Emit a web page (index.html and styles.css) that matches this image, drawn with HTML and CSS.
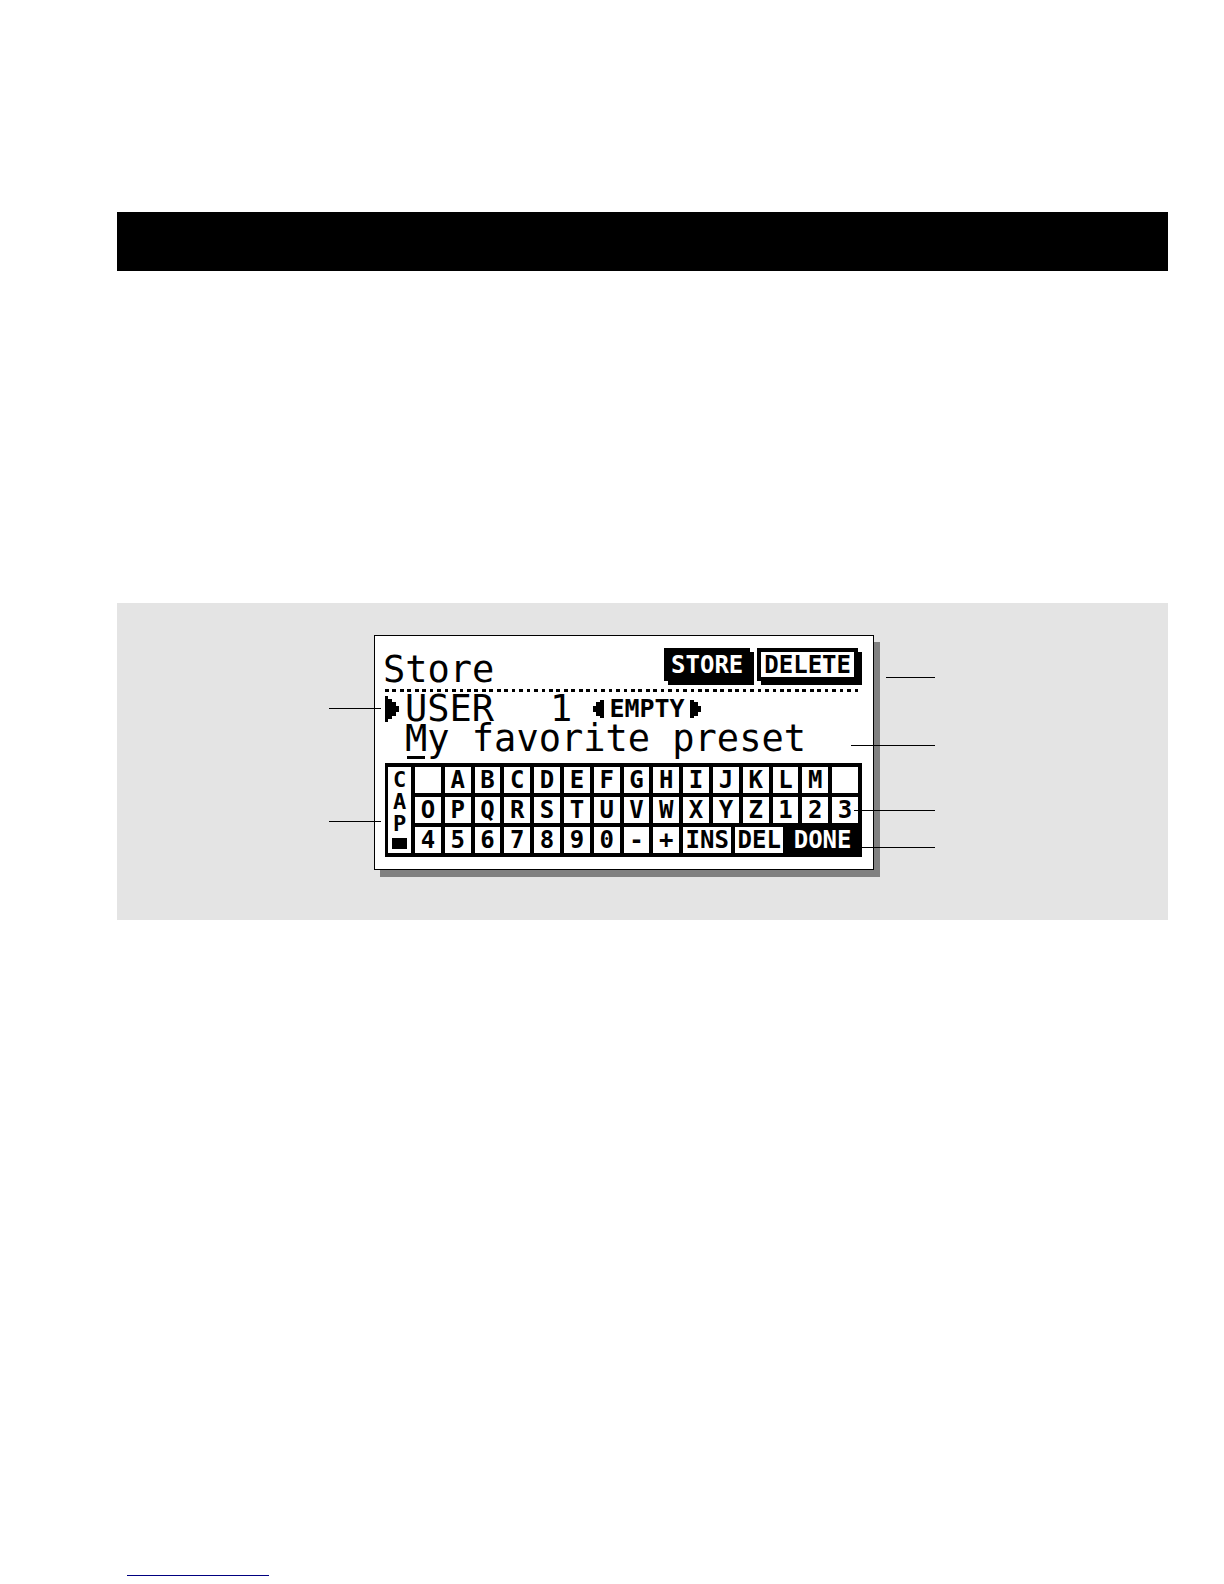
FILE: index.html
```
<!DOCTYPE html>
<html lang="en">
<head>
    <meta charset="UTF-8">
    <meta name="viewport" content="width=device-width, initial-scale=1.0">
    <title>Store</title>
    <link rel="stylesheet" href="styles.css">
</head>
<body>
    <main class="page">
        <div class="title-bar"></div>

        <div class="figure">
            <form class="lcd">
                <div class="header">
                    <h1>Store</h1>
                    <button type="button" class="action active">STORE</button>
                    <button type="button" class="action">DELETE</button>
                </div>

                <svg class="dots" viewBox="0 0 128 1" preserveAspectRatio="none" shape-rendering="crispEdges" aria-hidden="true">
                    <path d="M0 .5H128" stroke="#000" stroke-width="1" stroke-dasharray="1 1"/>
                </svg>

                <div class="slot">
                    <svg class="cursor" viewBox="0 0 14 26" aria-hidden="true">
                        <path d="M0 0h3v3h4v3h4v4h3v6h-3v4h-4v3h-4v3h-3z"/>
                    </svg>
                    <span class="bank">USER</span>
                    <span class="number">1</span>
                    <span class="status">
                        <svg viewBox="0 0 11 18" aria-hidden="true">
                            <path d="M11 0v18h-4v-2h-4v-4h-3v-6h3v-4h4v-2z"/>
                        </svg>
                        EMPTY
                        <svg viewBox="0 0 11 18" aria-hidden="true">
                            <path d="M0 0h4v2h4v4h3v6h-3v4h-4v2h-4z"/>
                        </svg>
                    </span>
                </div>

                <div class="name">
                    <input type="text" value="My favorite preset" aria-label="Preset name">
                    <span class="caret"></span>
                </div>

                <div class="keyboard">
                    <button type="button" class="caps"><span>C</span><span>A</span><span>P</span><i></i></button>
                    <button type="button" aria-label="Space"></button>
                    <button type="button">A</button>
                    <button type="button">B</button>
                    <button type="button">C</button>
                    <button type="button">D</button>
                    <button type="button">E</button>
                    <button type="button">F</button>
                    <button type="button">G</button>
                    <button type="button">H</button>
                    <button type="button">I</button>
                    <button type="button">J</button>
                    <button type="button">K</button>
                    <button type="button">L</button>
                    <button type="button">M</button>
                    <button type="button" aria-label="Space"></button>
                    <button type="button">O</button>
                    <button type="button">P</button>
                    <button type="button">Q</button>
                    <button type="button">R</button>
                    <button type="button">S</button>
                    <button type="button">T</button>
                    <button type="button">U</button>
                    <button type="button">V</button>
                    <button type="button">W</button>
                    <button type="button">X</button>
                    <button type="button">Y</button>
                    <button type="button">Z</button>
                    <button type="button">1</button>
                    <button type="button">2</button>
                    <button type="button">3</button>
                    <button type="button">4</button>
                    <button type="button">5</button>
                    <button type="button">6</button>
                    <button type="button">7</button>
                    <button type="button">8</button>
                    <button type="button">9</button>
                    <button type="button">0</button>
                    <button type="button">-</button>
                    <button type="button">+</button>
                    <div class="commands">
                        <button type="button">INS</button>
                        <button type="button">DEL</button>
                        <button type="button" class="active">DONE</button>
                    </div>
                </div>

                <!-- callout lines -->
                <span class="leader to-slot"></span>
                <span class="leader to-caps"></span>
                <span class="leader to-actions"></span>
                <span class="leader to-name"></span>
                <span class="leader to-keys"></span>
                <span class="leader to-done"></span>
            </form>
        </div>

        <hr class="footer-line">
    </main>
</body>
</html>
```
FILE: styles.css
```
* {
    box-sizing: border-box;
}

body {
    margin: 0;
    background-color: #fff;
    color: #000;
    font-family: "DejaVu Sans Mono", monospace;
}

.page {
    padding: 212px 56px 8px 117px;
}

.title-bar {
    height: 59px;
    background-color: #000;
}

.figure {
    display: flex;
    justify-content: center;
    margin-top: 332px;
    padding: 32px 37px 50px 0;
    background-color: #e4e4e4;
}

.lcd {
    position: relative;
    width: 100%;
    max-width: 500px;
    padding: 12px 11px 12px 10px;
    background-color: #fff;
    border: 1px solid #000;
    box-shadow: 6px 7px 0 #808080;
}

button {
    padding: 0;
    border: none;
    background-color: #fff;
    color: #000;
    font-family: inherit;
    font-size: 24px;
    font-weight: bold;
    line-height: 26px;
    text-align: center;
    cursor: pointer;
}

button.active {
    background-color: #000;
    color: #fff;
}

/* Header */
.header {
    display: flex;
    align-items: flex-start;
    gap: 7px;
    padding-right: 4px;
}

h1 {
    flex: 1;
    margin: 0 0 0 -2px;
    padding-top: 4px;
    font-size: 37px;
    font-weight: normal;
    line-height: 36px;
}

.action {
    height: 33px;
    padding: 0 3px;
    border: 4px solid #000;
    box-shadow: 4px 4px 0 #000;
}

.dots {
    display: block;
    width: 100%;
    height: 3px;
    margin-top: 1px;
}

/* Preset slot */
.slot {
    display: flex;
    align-items: center;
    height: 30px;
    margin-top: 2px;
    font-size: 37px;
    line-height: 30px;
}

.cursor {
    width: 14px;
    height: 26px;
    margin-right: 6px;
}

.number {
    margin-left: 56px;
}

.status {
    display: flex;
    align-items: center;
    gap: 5px;
    margin-left: 21px;
    font-size: 25px;
    font-weight: bold;
}

.status svg {
    width: 11px;
    height: 18px;
}

.name {
    position: relative;
    display: flex;
    align-items: center;
    height: 30px;
    padding-left: 20px;
}

/* taller than its row so that the descenders are not cut */
.name input {
    flex: 1;
    min-width: 0;
    height: 44px;
    padding: 0;
    border: none;
    outline: none;
    background: none;
    color: #000;
    font-family: inherit;
    font-size: 37px;
    line-height: 44px;
}

.caret {
    position: absolute;
    left: 22px;
    bottom: -5px;
    width: 18px;
    height: 3px;
    background-color: #000;
}

/* Keyboard */
.keyboard {
    display: grid;
    grid-template-columns: 23px repeat(15, 1fr);
    grid-auto-rows: 26px;
    gap: 4px;
    margin-top: 9px;
    padding: 4px 4px 4px 3px;
    background-color: #000;
}

.caps {
    grid-row: span 3;
    display: flex;
    flex-direction: column;
    align-items: center;
    padding-top: 2px;
    font-size: 22px;
    line-height: 22px;
}

.caps i {
    width: 15px;
    height: 11px;
    margin-top: 3px;
    background-color: #000;
}

.commands {
    grid-column: span 6;
    display: grid;
    grid-template-columns: 48px 48px 1fr;
    gap: 4px;
}

/* Callout lines */
.leader {
    position: absolute;
    height: 1px;
    background-color: #000;
}

.to-slot,
.to-caps {
    left: -46px;
    width: 52px;
}

.to-slot {
    top: 72px;
}

.to-caps {
    top: 185px;
}

.to-actions,
.to-name,
.to-keys,
.to-done {
    right: -62px;
    width: 81px;
}

.to-actions {
    top: 41px;
    width: 49px;
}

.to-name {
    top: 109px;
    width: 84px;
}

.to-keys {
    top: 174px;
}

.to-done {
    top: 211px;
}

.footer-line {
    width: 142px;
    margin: 655px 0 0 10px;
    border: none;
    border-top: 1px solid #000080;
}
```
